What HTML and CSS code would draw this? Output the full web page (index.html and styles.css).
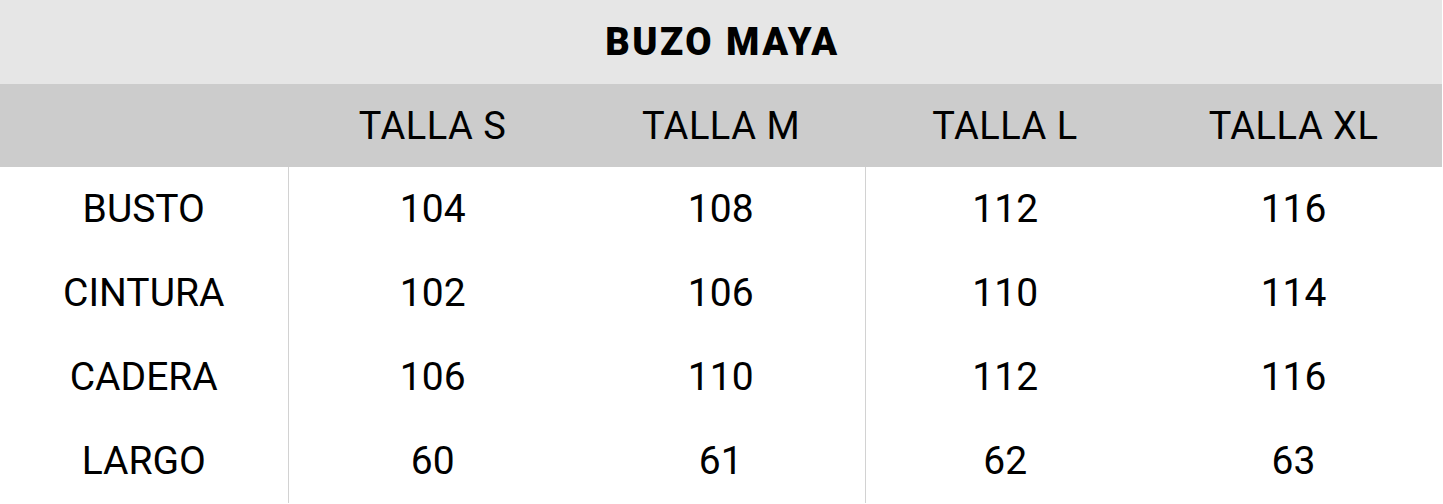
FILE: index.html
```html
<!DOCTYPE html>
<html lang="es">
<head>
<meta charset="utf-8">
<title>Buzo Maya</title>
<link rel="stylesheet" href="styles.css">
</head>
<body>
<table class="sizes">
  <colgroup>
    <col class="c1"><col class="c2"><col class="c3"><col class="c4"><col class="c5">
  </colgroup>
  <thead>
    <tr class="title-row"><th colspan="5">BUZO MAYA</th></tr>
    <tr class="head-row">
      <th></th><th>TALLA S</th><th>TALLA M</th><th>TALLA L</th><th>TALLA XL</th>
    </tr>
  </thead>
  <tbody>
    <tr><td class="lbl">BUSTO</td><td>104</td><td>108</td><td class="sep">112</td><td>116</td></tr>
    <tr><td class="lbl">CINTURA</td><td>102</td><td>106</td><td class="sep">110</td><td>114</td></tr>
    <tr><td class="lbl">CADERA</td><td>106</td><td>110</td><td class="sep">112</td><td>116</td></tr>
    <tr><td class="lbl">LARGO</td><td>60</td><td>61</td><td class="sep">62</td><td>63</td></tr>
  </tbody>
</table>
</body>
</html>
```

FILE: styles.css
```css
html, body {
  margin: 0;
  padding: 0;
  background: #ffffff;
}
.sizes {
  width: 1442px;
  border-collapse: collapse;
  table-layout: fixed;
  font-family: Roboto, "Liberation Sans", sans-serif;
  color: #000;
}
.sizes .c1 { width: 288px; }
.sizes .c2 { width: 289px; }
.sizes .c3 { width: 288px; }
.sizes .c4 { width: 280px; }
.sizes .c5 { width: 297px; }
.sizes th, .sizes td {
  padding: 0;
  text-align: center;
  vertical-align: middle;
}
.title-row th {
  height: 84px;
  background: #e6e6e6;
  font-size: 38px;
  font-weight: 900;
  letter-spacing: 2.5px;
  padding-left: 3px;
}
.head-row th {
  height: 83px;
  background: #cccccc;
  font-size: 38px;
  font-weight: 400;
  letter-spacing: 0.5px;
}
.sizes tbody td {
  height: 84px;
  font-size: 39px;
  font-weight: 400;
}
.sizes tbody td.lbl {
  border-right: 1px solid #d2d2d2;
}
.sizes tbody td.sep {
  border-left: 1px solid #d2d2d2;
}
```
